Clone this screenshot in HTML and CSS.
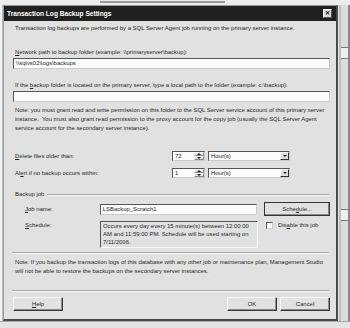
FILE: index.html
```html
<!DOCTYPE html>
<html>
<head>
  <title>Transaction Log Backup Settings</title>
  <link rel="stylesheet" href="styles.css">
</head>
<body>
  <div class="screen">
    <div class="behind-top"><span class="behind-mark"></span></div>
    <div class="middle">
      <div class="edge-left"></div>

      <div class="dialog">
        <div class="titlebar">
          <span class="title">Transaction Log Backup Settings</span>
          <span class="close">&#x2715;</span>
        </div>

        <div class="content">
          <p class="intro">Transaction log backups are performed by a SQL Server Agent job running on the primary server instance.</p>

          <div class="label label-network"><u>N</u>etwork path to backup folder (example: \\primaryserver\backup):</div>
          <div class="textbox">\\sqlvs02\logs\backups</div>

          <div class="label label-local">If the <u>b</u>ackup folder is located on the primary server, type a local path to the folder (example: c:\backup):</div>
          <div class="textbox"></div>

          <p class="note">Note: you must grant read and write permission on this folder to the SQL Server service account of this primary server instance.&nbsp; You must also grant read permission to the proxy account for the copy job (usually the SQL Server Agent service account for the secondary server instance).</p>

          <div class="row row-delete">
            <span class="row-label"><u>D</u>elete files older than:</span>
            <div class="spin">
              <span class="spin-value">72</span>
              <span class="spin-btns"><span class="arrow-up"></span><span class="arrow-down"></span></span>
            </div>
            <div class="combo"><span class="combo-value">Hour(s)</span><span class="combo-btn"><span class="arrow-down"></span></span></div>
          </div>

          <div class="row row-alert">
            <span class="row-label">Al<u>e</u>rt if no backup occurs within:</span>
            <div class="spin">
              <span class="spin-value">1</span>
              <span class="spin-btns"><span class="arrow-up"></span><span class="arrow-down"></span></span>
            </div>
            <div class="combo"><span class="combo-value">Hour(s)</span><span class="combo-btn"><span class="arrow-down"></span></span></div>
          </div>

          <div class="group-head">
            <span class="group-title">Backup job</span>
            <span class="etch"></span>
          </div>

          <div class="job-row">
            <span class="sub-label"><u>J</u>ob name:</span>
            <div class="textbox job-name">LSBackup_Scratch1</div>
            <span class="button schedule-btn">Sche<u>d</u>ule...</span>
          </div>

          <div class="sched-row">
            <span class="sub-label"><u>S</u>chedule:</span>
            <div class="textarea">Occurs every day every 15 minute(s) between 12:00:00 AM and 11:59:00 PM. Schedule will be used starting on 7/11/2006.</div>
            <div class="check"><span class="box"></span><span>Dis<u>a</u>ble this job</span></div>
          </div>

          <div class="sep sep-first"></div>

          <p class="note2">Note: If you backup the transaction logs of this database with any other job or maintenance plan, Management Studio will not be able to restore the backups on the secondary server instances.</p>

          <div class="sep sep-second"></div>

          <div class="buttons">
            <span class="button"><u>H</u>elp</span>
            <span class="spacer"></span>
            <span class="button">OK</span>
            <span class="button">Cancel</span>
          </div>
        </div>
      </div>

      <div class="edge-right">
        <div class="scroll-box"></div>
        <div class="scroll-box low"></div>
      </div>
    </div>
    <div class="behind-bottom"></div>
  </div>
</body>
</html>
```

FILE: styles.css
```css
:root {
  --face: #e1e1e1;
  --text: #262626;
  --dark: #555;
  --shadow: #8a8a8a;
  --light: #f8f8f8;
  --field: #fbfbfb;
  --font: "Liberation Sans", Arial, sans-serif;
}
* {
  box-sizing: border-box;
}
body {
  margin: 0;
  width: 350px;
  height: 328px;
  overflow: hidden;
  background: #e8e8e8;
  font-family: var(--font);
  color: var(--text);
}
p {
  margin: 0;
}
u {
  text-decoration: underline;
}
.screen {
  display: flex;
  flex-direction: column;
  height: 328px;
}
.behind-top {
  height: 5px;
  background: #ececec;
  padding: 1px 0 0 100px;
}
.behind-mark {
  display: block;
  width: 125px;
  height: 2px;
  background: #9a9a9a;
}
.middle {
  display: flex;
  height: 316px;
}
.edge-left {
  width: 3px;
  background: #f2f2f2;
  border-right: 1px solid #bbb;
}
.dialog {
  width: 335px;
  background: var(--face);
  border: 1px solid #9a9a9a;
  border-right: 2px solid #4a4a4a;
  border-bottom: 2px solid #4a4a4a;
  display: flex;
  flex-direction: column;
}
.titlebar {
  height: 15px;
  background: #202020;
  display: flex;
  align-items: center;
  justify-content: space-between;
  padding: 0 4px 0 3px;
}
.title {
  color: #fff;
  font-weight: bold;
  font-size: 6.6px;
}
.close {
  width: 9px;
  height: 9px;
  background: #d8d8d8;
  border: 1px solid #fff;
  border-right-color: #555;
  border-bottom-color: #555;
  font-size: 6px;
  line-height: 7px;
  text-align: center;
  color: #111;
  font-weight: bold;
}
.content {
  padding: 0 6px 0 9px;
  font-size: 5.95px;
  line-height: 9px;
}
.intro {
  margin-top: 3px;
  padding-left: 2px;
}
.label {
  padding-left: 2px;
}
.label-network {
  margin-top: 15px;
}
.label-local {
  margin-top: 12px;
}
.textbox {
  height: 11px;
  background: var(--field);
  border: 1px solid var(--dark);
  border-right-color: #ccc;
  border-bottom-color: #ccc;
  padding-left: 2px;
  line-height: 9px;
  white-space: nowrap;
  overflow: hidden;
}
.label + .textbox {
  margin-top: 1px;
}
.note {
  margin-top: 4px;
  padding-left: 2px;
}
.row {
  display: flex;
  align-items: center;
  height: 10px;
}
.row-delete {
  margin-top: 18px;
}
.row-alert {
  margin-top: 7px;
}
.row-label {
  width: 159px;
  padding-left: 2px;
}
.spin {
  display: flex;
  width: 33px;
  height: 10px;
  background: var(--field);
  border: 1px solid var(--dark);
  border-right-color: #ccc;
  border-bottom-color: #ccc;
}
.spin-value {
  flex: 1;
  padding-left: 2px;
  line-height: 8px;
}
.spin-btns {
  width: 10px;
  display: flex;
  flex-direction: column;
  background: var(--face);
}
.spin-btns > span {
  flex: 1;
  border: 1px solid var(--light);
  border-right-color: var(--shadow);
  border-bottom-color: var(--shadow);
}
.arrow-up,
.arrow-down {
  display: flex;
  align-items: center;
  justify-content: center;
}
.arrow-up::after {
  content: "";
  border-left: 2px solid transparent;
  border-right: 2px solid transparent;
  border-bottom: 2px solid #222;
}
.arrow-down::after {
  content: "";
  border-left: 2px solid transparent;
  border-right: 2px solid transparent;
  border-top: 2px solid #222;
}
.combo {
  display: flex;
  width: 82px;
  height: 10px;
  margin-left: 3px;
  background: var(--field);
  border: 1px solid var(--dark);
  border-right-color: #ccc;
  border-bottom-color: #ccc;
}
.combo-value {
  flex: 1;
  padding-left: 2px;
  line-height: 8px;
}
.combo-btn {
  width: 9px;
  display: flex;
  background: var(--face);
  border: 1px solid var(--light);
  border-right-color: #333;
  border-bottom-color: #333;
}
.combo-btn .arrow-down {
  flex: 1;
}
.group-head {
  display: flex;
  align-items: center;
  margin-top: 12px;
  padding-left: 2px;
}
.etch {
  flex: 1;
  margin-left: 3px;
  margin-right: 1px;
  height: 2px;
  border-top: 1px solid #a8a8a8;
  border-bottom: 1px solid var(--light);
}
.job-row {
  display: flex;
  align-items: center;
  height: 14px;
  margin-top: 3px;
}
.sub-label {
  width: 87px;
  padding-left: 12px;
  align-self: flex-start;
}
.job-row .sub-label {
  align-self: center;
}
.job-name {
  width: 158px;
}
.button {
  display: flex;
  align-items: center;
  justify-content: center;
  height: 14px;
  background: var(--face);
  border: 1px solid var(--light);
  border-right-color: #3a3a3a;
  border-bottom-color: #3a3a3a;
  box-shadow: inset -1px -1px 0 var(--shadow);
}
.schedule-btn {
  width: 66px;
  margin-left: 7px;
  outline: 1px solid #333;
  outline-offset: -1px;
}
.sched-row {
  display: flex;
  margin-top: 5px;
}
.textarea {
  width: 158px;
  height: 27px;
  background: var(--face);
  border: 1px solid var(--dark);
  border-right-color: var(--light);
  border-bottom-color: var(--light);
  padding: 0 2px;
  line-height: 8px;
}
.check {
  display: flex;
  align-items: flex-start;
  margin-left: 8px;
  margin-top: 1px;
}
.box {
  width: 7px;
  height: 7px;
  margin-right: 5px;
  background: var(--field);
  border: 1px solid var(--dark);
  border-right-color: #ccc;
  border-bottom-color: #ccc;
}
.check span:last-child {
  line-height: 7px;
}
.sep {
  height: 2px;
  border-top: 1px solid #a8a8a8;
  border-bottom: 1px solid var(--light);
  margin-right: 1px;
  margin-left: -1px;
}
.sep-first {
  margin-top: 4px;
}
.note2 {
  margin-top: 4px;
  padding-left: 2px;
}
.sep-second {
  margin-top: 14px;
}
.buttons {
  display: flex;
  gap: 3px;
  margin-top: 5px;
}
.buttons .button {
  width: 50px;
}
.spacer {
  flex: 1;
}
.edge-right {
  flex: 1;
  background: #dcdcdc;
  border-left: 2px solid #bdbdbd;
  border-right: 2px solid #888;
  margin-left: 1px;
  padding-top: 42px;
}
.scroll-box {
  height: 12px;
  border-top: 1px solid #777;
  border-bottom: 1px solid #777;
  background: #eee;
}
.scroll-box.low {
  margin-top: 150px;
}
.behind-bottom {
  flex: 1;
  background: #e4e4e4;
  border-top: 1px solid #aaa;
}
```
